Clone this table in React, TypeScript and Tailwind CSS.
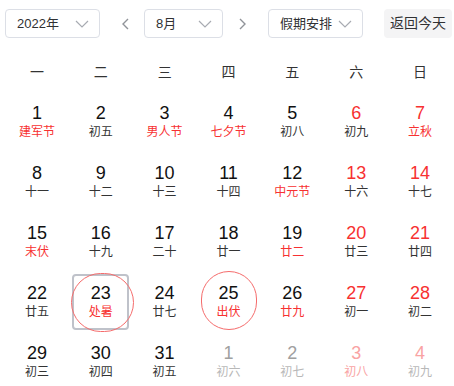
import React from 'react';

type Day = {
  n: number;
  lunar: string;
  numRed?: boolean;
  lunarRed?: boolean;
  other?: boolean;
  today?: boolean;
  circle?: 'a' | 'b';
};

const weekdays = ['一', '二', '三', '四', '五', '六', '日'];

const days: Day[] = [
  { n: 1, lunar: '建军节', lunarRed: true },
  { n: 2, lunar: '初五' },
  { n: 3, lunar: '男人节', lunarRed: true },
  { n: 4, lunar: '七夕节', lunarRed: true },
  { n: 5, lunar: '初八' },
  { n: 6, lunar: '初九', numRed: true },
  { n: 7, lunar: '立秋', numRed: true, lunarRed: true },
  { n: 8, lunar: '十一' },
  { n: 9, lunar: '十二' },
  { n: 10, lunar: '十三' },
  { n: 11, lunar: '十四' },
  { n: 12, lunar: '中元节', lunarRed: true },
  { n: 13, lunar: '十六', numRed: true },
  { n: 14, lunar: '十七', numRed: true },
  { n: 15, lunar: '末伏', lunarRed: true },
  { n: 16, lunar: '十九' },
  { n: 17, lunar: '二十' },
  { n: 18, lunar: '廿一' },
  { n: 19, lunar: '廿二', lunarRed: true },
  { n: 20, lunar: '廿三', numRed: true },
  { n: 21, lunar: '廿四', numRed: true },
  { n: 22, lunar: '廿五' },
  { n: 23, lunar: '处暑', lunarRed: true, today: true, circle: 'a' },
  { n: 24, lunar: '廿七' },
  { n: 25, lunar: '出伏', lunarRed: true, circle: 'b' },
  { n: 26, lunar: '廿九', lunarRed: true },
  { n: 27, lunar: '初一', numRed: true },
  { n: 28, lunar: '初二', numRed: true },
  { n: 29, lunar: '初三' },
  { n: 30, lunar: '初四' },
  { n: 31, lunar: '初五' },
  { n: 1, lunar: '初六', other: true },
  { n: 2, lunar: '初七', other: true },
  { n: 3, lunar: '初八', other: true, numRed: true, lunarRed: true },
  { n: 4, lunar: '初九', other: true, numRed: true },
];

function Chevron() {
  return (
    <svg width="14" height="8" viewBox="0 0 14 8" fill="none">
      <path d="M1 1L7 7L13 1" stroke="#a8abb2" strokeWidth="1.2" />
    </svg>
  );
}

function Arrow({ dir }: { dir: 'left' | 'right' }) {
  return (
    <svg width="8" height="12" viewBox="0 0 8 12" fill="none">
      <path
        d={dir === 'left' ? 'M7 1L2 6L7 11' : 'M1 1L6 6L1 11'}
        stroke="#909399"
        strokeWidth="1.4"
      />
    </svg>
  );
}

function Select({ label, width }: { label: string; width: string }) {
  return (
    <div
      className={`flex h-[29px] items-center justify-between rounded-[4px] border border-[#dcdfe6] bg-white pl-[11px] pr-[10px] text-[13px] text-[#303133] ${width}`}
    >
      <span>{label}</span>
      <Chevron />
    </div>
  );
}

function numColor(d: Day) {
  if (d.other) return d.numRed ? 'text-[#f9a3a3]' : 'text-[#a0a0a0]';
  return d.numRed ? 'text-[#f73131]' : 'text-[#111]';
}

function lunarColor(d: Day) {
  if (d.other) return d.lunarRed ? 'text-[#f9a3a3]' : 'text-[#b8b8b8]';
  return d.lunarRed ? 'text-[#f73131]' : 'text-[#333]';
}

export default function App() {
  return (
    <div
      className="h-[386px] w-[454px] overflow-hidden bg-white"
      style={{ fontFamily: '"Liberation Sans", "Noto Sans CJK SC", sans-serif' }}
    >
      <div className="flex items-center pl-[5px] pt-[9px]">
        <Select label="2022年" width="w-[95px]" />
        <div className="ml-[21px] mr-[15px] flex items-center">
          <Arrow dir="left" />
        </div>
        <Select label="8月" width="w-[79px]" />
        <div className="ml-[16px] mr-[21px] flex items-center">
          <Arrow dir="right" />
        </div>
        <Select label="假期安排" width="w-[95px]" />
        <button className="ml-[21px] h-[29px] w-[68px] rounded-[4px] bg-[#f4f4f5] text-[14px] text-[#303133]">
          返回今天
        </button>
      </div>

      <div className="mt-[14px] grid h-[40px] grid-cols-7 items-center pl-[5px] pr-[2px] text-center text-[14px] text-[#333]">
        {weekdays.map((w) => (
          <div key={w}>{w}</div>
        ))}
      </div>

      <div className="grid grid-cols-7 pl-[5px] pr-[2px]">
        {days.map((d, i) => (
          <div key={i} className="relative flex h-[60px] items-center justify-center">
            <div
              className={`flex h-[56px] w-[57px] flex-col items-center justify-center rounded-[4px] ${
                d.today ? 'border-2 border-[#bfc2ca]' : 'border-2 border-transparent'
              }`}
            >
              <div className={`text-[18px] leading-[20px] ${numColor(d)}`}>{d.n}</div>
              <div className={`text-[12px] leading-[18px] ${lunarColor(d)}`}>{d.lunar}</div>
            </div>
            {d.circle === 'a' && (
              <div className="absolute left-[2px] top-[1px] h-[59px] w-[63px] rounded-full border border-[#f56c6c]" />
            )}
            {d.circle === 'b' && (
              <div className="absolute left-[4px] top-[-1px] h-[59px] w-[56px] rounded-full border border-[#f56c6c]" />
            )}
          </div>
        ))}
      </div>
    </div>
  );
}
